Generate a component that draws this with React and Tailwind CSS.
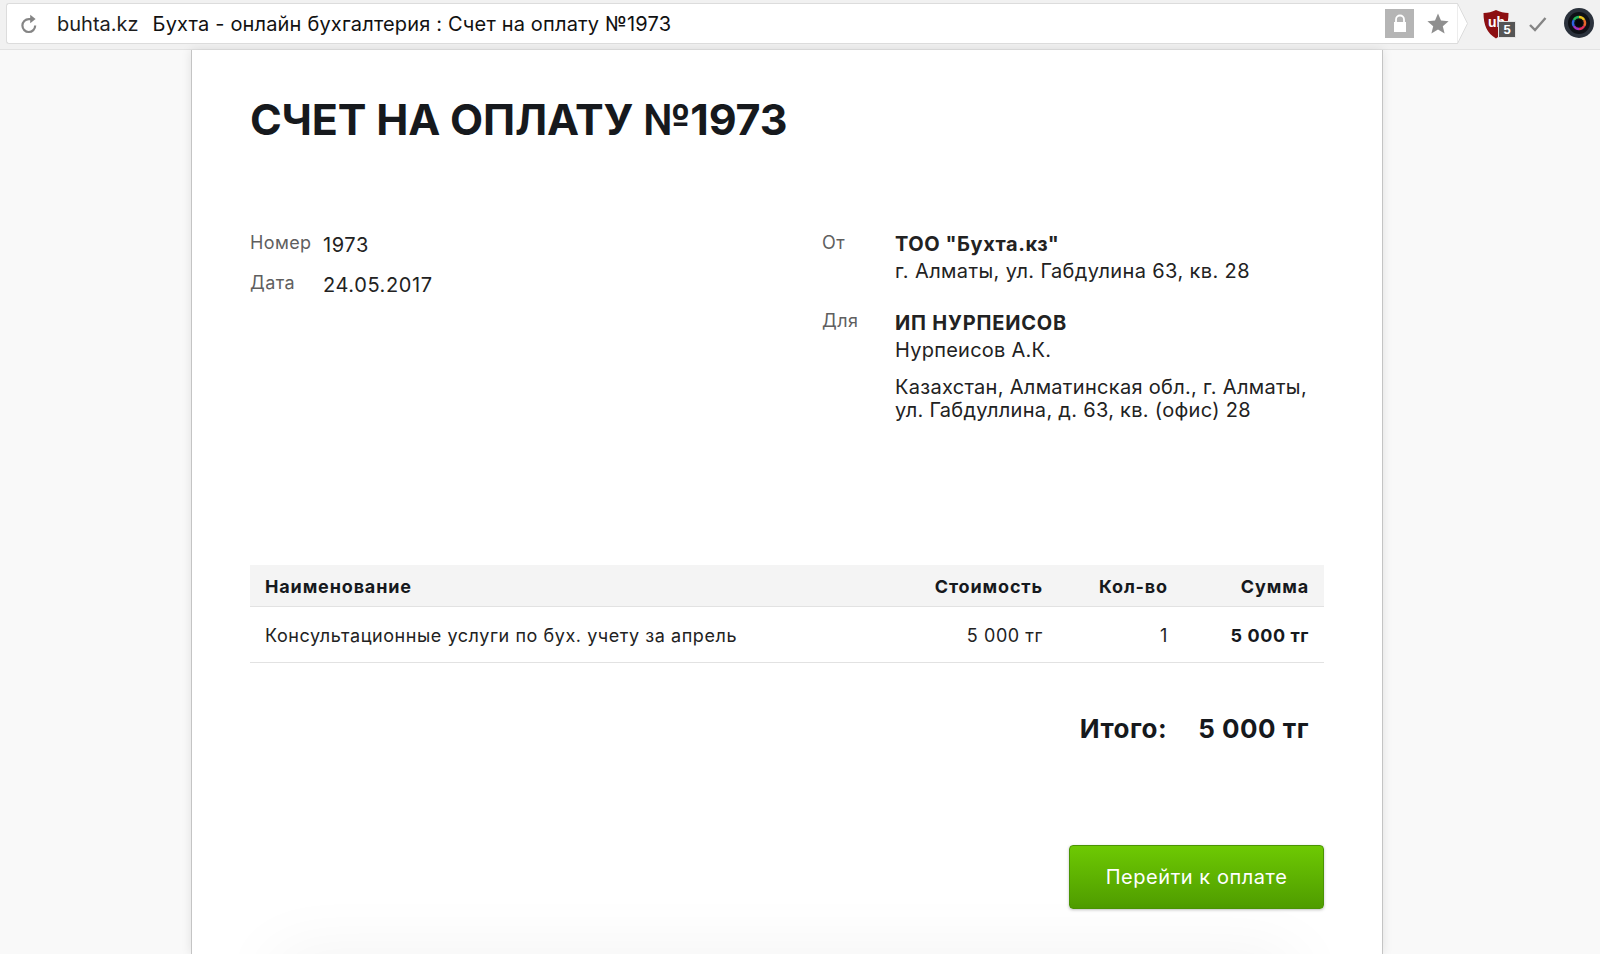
import React from 'react';

const ReloadIcon = () => (
  <svg width="18" height="20" viewBox="0 0 18 20" fill="none">
    <path d="M15.2 11.6A6.4 6.4 0 1 1 8.8 5.2H11" stroke="#858585" strokeWidth="2.2" />
    <path d="M10.2 0.8 15.6 5 10.2 9.2z" fill="#858585" />
  </svg>
);

const LockIcon = () => (
  <div className="w-[29px] h-[29px] bg-[#b5b5b5] flex items-center justify-center">
    <svg width="14" height="19" viewBox="0 0 14 19" fill="none">
      <path d="M3 8V5.500a4 4 0 0 1 8 0V8" stroke="#fff" strokeWidth="1.8" />
      <rect x="1" y="8" width="12" height="10" fill="#fff" />
    </svg>
  </div>
);

const StarIcon = () => (
  <svg width="22" height="21" viewBox="0 0 22 21">
    <path d="M11 0.500 14 7.600 21.600 8.200 15.800 13.200 17.600 20.600 11 16.600 4.400 20.600 6.200 13.200 0.400 8.200 8 7.600z" fill="#8f8f8f" />
  </svg>
);

const UblockIcon = () => (
  <div className="relative w-[34px] h-[30px]">
    <svg width="26" height="30" viewBox="0 0 26 30" className="absolute left-0 top-0">
      <path d="M13 1 C17 3 21 4 25.500 4 C25.500 16 22 24 13 29.500 C4 24 0.500 16 0.500 4 C5 4 9 3 13 1z" fill="#8c0f12" />
    </svg>
    <span className="absolute left-[5px] top-[5px] text-[14px] leading-[16px] font-bold text-white font-['Liberation_Sans',sans-serif]">ub</span>
    <span className="absolute left-[15px] top-[12px] w-[18px] h-[17px] bg-[#555555] border border-[#e4e4e4] text-white text-[13px] leading-[15px] font-bold text-center font-['Liberation_Sans',sans-serif]">5</span>
  </div>
);

const CheckIcon = () => (
  <svg width="18" height="15" viewBox="0 0 18 15" fill="none">
    <path d="M1 8 6 13 16.500 1" stroke="#858585" strokeWidth="2.4" />
  </svg>
);

const LENS_ARCS = [
  ['M15 9A6 6 0 0 1 20.200 12', '#e8c21f'],
  ['M20.200 12A6 6 0 0 1 20.200 18', '#e8652a'],
  ['M20.200 18A6 6 0 0 1 15 21', '#e0305c'],
  ['M15 21A6 6 0 0 1 9.800 18', '#a533c4'],
  ['M9.800 18A6 6 0 0 1 9.800 12', '#2f62e0'],
  ['M9.800 12A6 6 0 0 1 15 9', '#23b45a'],
];

const LensIcon = () => (
  <svg width="30" height="30" viewBox="0 0 30 30" fill="none">
    <circle cx="15" cy="15" r="15" fill="#2b323c" />
    <circle cx="15" cy="15" r="11" fill="#0e1116" />
    {LENS_ARCS.map(([d, color]) => (
      <path key={color} d={d} stroke={color} strokeWidth="2.400" />
    ))}
    <circle cx="15" cy="15" r="3.500" fill="#05060a" />
  </svg>
);

const Browser = () => (
  <div className="h-[50px] shrink-0 bg-[#f1f1f1] border-b border-[#e2e2e2] flex items-center">
    <div className="relative ml-[6px] mb-[2px] w-[1452px] h-[41px] bg-white border border-r-0 border-[#dcdcdc] rounded-l-[3px] flex items-center">
      <div className="ml-[13px] w-[18px] flex"><ReloadIcon /></div>
      <span className="ml-[19px] text-[20px] text-[#1d1d1d]">buhta.kz</span>
      <span className="ml-[14px] text-[20px] tracking-[0.17px] text-[#111111]">Бухта - онлайн бухгалтерия : Счет на оплату №1973</span>
      <div className="ml-auto mr-[9px] flex items-center gap-[13px]">
        <LockIcon />
        <StarIcon />
      </div>
      <div className="absolute -right-[10px] top-[-1px] w-[11px] h-[41px]">
        <svg width="11" height="41" viewBox="0 0 11 41" fill="none">
          <path d="M0 0.500H0.500L10.500 20.500 0.500 40.500H0z" fill="#fff" stroke="#dcdcdc" />
        </svg>
      </div>
    </div>
    <div className="ml-[25px] mb-[1px] flex items-center"><UblockIcon /></div>
    <div className="ml-[12px] mb-[1px] flex"><CheckIcon /></div>
    <div className="ml-[17px] mb-[3px] flex"><LensIcon /></div>
  </div>
);

const Label = ({ children, className = '' }) => (
  <div className={`text-[18px] leading-[24px] tracking-[0.4px] text-[#5f5f5f] ${className}`}>{children}</div>
);

const Invoice = () => (
  <div className="w-[1192px] ml-[191px] flex-1 bg-white border-x border-[#c4c4c4] shadow-[0_0_10px_rgba(0,0,0,0.1)] pl-[58px] pr-[58px] flex flex-col overflow-hidden">
    <h1 className="mt-[38px] text-[43px] leading-[62px] font-bold text-[#16191d] tracking-[-0.2px]">СЧЕТ НА ОПЛАТУ №1973</h1>

    <div className="mt-[81px] flex text-[20px] tracking-[0.38px] text-[#222222]">
      <div className="w-[572px] self-start grid grid-cols-[73px_1fr] gap-y-[14px] items-start">
        <Label>Номер</Label>
        <div className="leading-[24px] mt-[2px] tracking-[0.6px]">1973</div>
        <Label>Дата</Label>
        <div className="leading-[24px] mt-[2px] tracking-[0.6px]">24.05.2017</div>
      </div>
      <div className="flex-1 grid grid-cols-[73px_1fr] gap-y-[25px] items-start">
        <Label>От</Label>
        <div className="leading-[27px]">
          <div className="font-bold tracking-[0.55px]">ТОО "Бухта.кз"</div>
          <div>г. Алматы, ул. Габдулина 63, кв. 28</div>
        </div>
        <Label className="mt-[-1px]">Для</Label>
        <div>
          <div className="leading-[27px]">
            <div className="font-bold tracking-[0.8px]">ИП НУРПЕИСОВ</div>
            <div className="tracking-[0.25px]">Нурпеисов А.К.</div>
          </div>
          <div className="mt-[12px] leading-[23px] tracking-[0.3px]">Казахстан, Алматинская обл., г. Алматы,<br />ул. Габдуллина, д. 63, кв. (офис) 28</div>
        </div>
      </div>
    </div>

    <div className="mt-[143px] text-[18px] tracking-[0.56px] text-[#222222]">
      <div className="h-[42px] pt-[1px] bg-[#f4f4f4] border-b border-[#e2e2e2] flex items-center px-[15px] font-bold tracking-[0.85px] text-[#16191d]">
        <div className="flex-1">Наименование</div>
        <div className="w-[200px] text-right">Стоимость</div>
        <div className="w-[125px] text-right">Кол-во</div>
        <div className="w-[141px] text-right">Сумма</div>
      </div>
      <div className="h-[56px] pt-[1px] border-b border-[#e2e2e2] flex items-center px-[15px]">
        <div className="flex-1">Консультационные услуги по бух. учету за апрель</div>
        <div className="w-[200px] text-right">5 000 тг</div>
        <div className="w-[125px] text-right">1</div>
        <div className="w-[141px] text-right font-bold text-[#16191d]">5 000 тг</div>
      </div>
    </div>

    <div className="mt-[46px] pr-[15px] flex justify-end text-[26px] leading-[40px] font-bold tracking-[0.5px] text-[#16191d]">
      <span>Итого:</span>
      <span className="ml-[31px]">5 000 тг</span>
    </div>

    <div className="mt-[96px] flex justify-end">
      <button className="w-[255px] h-[64px] rounded-[4px] border border-[#4a9404] bg-gradient-to-b from-[#6ec903] to-[#4f9c00] shadow-[0_1px_3px_rgba(0,0,0,0.25)] text-white text-[20px] tracking-[0.55px]">
        Перейти к оплате
      </button>
    </div>

    {/* next block sits just below the fold, only its shadow shows */}
    <div className="mt-[46px] h-[60px] shrink-0 ml-[25px] mr-[30px] bg-white shadow-[0_0_70px_rgba(0,0,0,0.06)]" />
  </div>
);

export default function App() {
  return (
    <div className="h-[954px] overflow-hidden flex flex-col bg-[#f9f9f9] font-['Inter',sans-serif]">
      <Browser />
      <Invoice />
    </div>
  );
}
